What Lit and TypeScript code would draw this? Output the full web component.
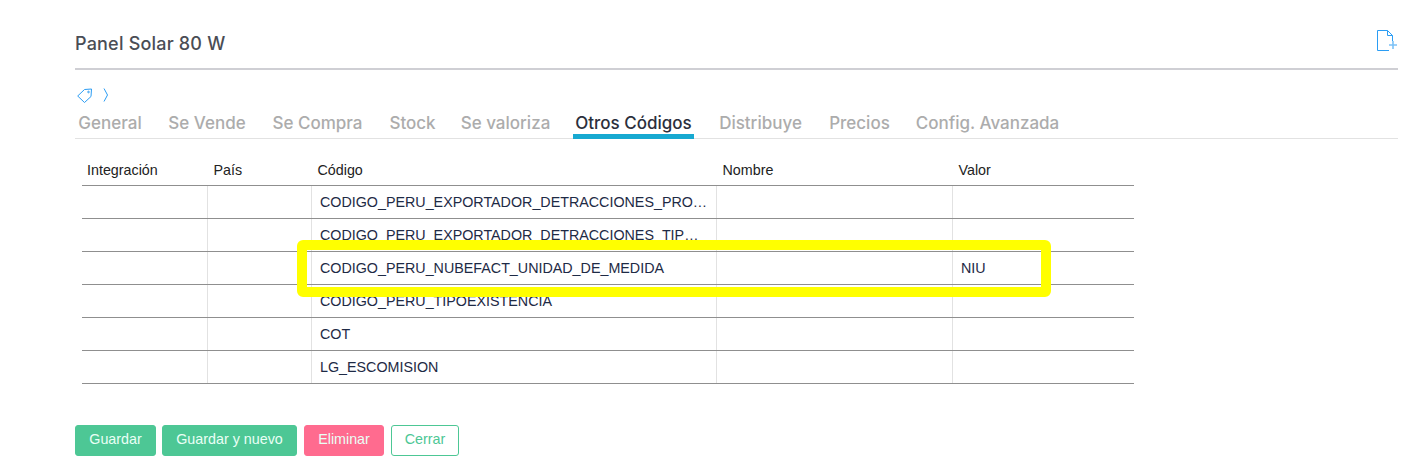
import { LitElement, html, css } from 'lit';
import { customElement } from 'lit/decorators.js';

const TABS = [
  { label: 'General', width: 68 },
  { label: 'Se Vende', width: 82 },
  { label: 'Se Compra', width: 95 },
  { label: 'Stock', width: 51 },
  { label: 'Se valoriza', width: 91 },
  { label: 'Otros Códigos', width: 121 },
  { label: 'Distribuye', width: 89 },
  { label: 'Precios', width: 65 },
  { label: 'Config. Avanzada', width: 147 },
];

const ROWS = [
  { code: 'CODIGO_PERU_EXPORTADOR_DETRACCIONES_PRODUCTO', value: '' },
  { code: 'CODIGO_PERU_EXPORTADOR_DETRACCIONES_TIPO_OPERACION', value: '' },
  { code: 'CODIGO_PERU_NUBEFACT_UNIDAD_DE_MEDIDA', value: 'NIU' },
  { code: 'CODIGO_PERU_TIPOEXISTENCIA', value: '' },
  { code: 'COT', value: '' },
  { code: 'LG_ESCOMISION', value: '' },
];

@customElement('app-root')
export class AppRoot extends LitElement {
  static styles = css`
    :host {
      display: block;
      position: relative;
      height: 474px;
      background: #fff;
      font-family: 'Liberation Sans', Arial, sans-serif;
      overflow: hidden;
    }
    .page {
      display: flex;
      flex-direction: column;
      padding: 0 7px 0 75px;
    }
    .head {
      display: flex;
      justify-content: space-between;
      align-items: flex-start;
      height: 68px;
      border-bottom: 2px solid #cfcfd4;
      box-sizing: content-box;
    }
    .title {
      margin-top: 33px;
      font-family: Inter, 'Open Sans', sans-serif;
      font-size: 18px;
      line-height: 21px;
      font-weight: 500;
      color: #4a4d55;
      letter-spacing: 0.2px;
    }
    .new {
      margin: 30px 0 0 0;
      width: 22px;
      height: 22px;
    }
    .crumb {
      display: flex;
      align-items: center;
      gap: 10px;
      height: 16px;
      margin-top: 17px;
      padding-left: 2px;
    }
    .tabs {
      display: flex;
      gap: 22px;
      height: 34px;
      margin-top: 2px;
      border-bottom: 1px solid #e2e2e2;
      box-sizing: border-box;
      padding-left: 1px;
    }
    .tab {
      padding: 5px 0 0;
      height: 34px;
      box-sizing: border-box;
      font-family: Inter, 'Open Sans', sans-serif;
      font-size: 17px;
      line-height: 26px;
      font-weight: 500;
      color: #acacac;
      text-align: center;
      white-space: nowrap;
    }
    .tab.on {
      color: #2b2f3c;
      border-bottom: 5px solid #17a9d1;
    }
    table {
      width: 1052px;
      margin: 16px 0 0 7px;
      border-collapse: collapse;
      table-layout: fixed;
      font-size: 14.3px;
      color: #1e2a45;
    }
    th {
      height: 30px;
      padding: 0 0 0 6.5px;
      text-align: left;
      font-weight: 400;
      color: #222;
      border-bottom: 1px solid #8f8f8f;
    }
    th:first-child {
      padding-left: 5px;
    }
    td {
      height: 32px;
      padding: 0 8px 0 8.5px;
      border-bottom: 1px solid #8f8f8f;
      border-left: 1px solid #e2e2e2;
      white-space: nowrap;
      overflow: hidden;
      text-overflow: ellipsis;
    }
    td:first-child {
      border-left: 0;
    }
    .actions {
      display: flex;
      gap: 6px;
      margin-top: 41px;
    }
    button {
      height: 31px;
      padding: 0 0 3px;
      border: 1px solid #4dc795;
      border-radius: 3px;
      background: #4dc795;
      color: #eafff5;
      font-family: inherit;
      font-size: 14.3px;
    }
    button.del {
      background: #ff6b8f;
      border-color: #ff6b8f;
      margin-left: 1px;
    }
    button.close {
      background: #fff;
      color: #4dc795;
      margin-left: 1px;
    }
    .mark {
      position: absolute;
      left: 297px;
      top: 240px;
      width: 754px;
      height: 57px;
      box-sizing: border-box;
      border: 10px solid #ffff00;
      border-radius: 6px;
      pointer-events: none;
    }
  `;

  render() {
    return html`
      <div class="page">
        <div class="head">
          <div class="title">Panel Solar 80 W</div>
          <svg class="new" viewBox="0 0 22 22" fill="none" stroke="#2b9df4" stroke-width="1">
            <path d="M13 20.5H1.5V0.5H11.5L16.5 5.5V11"/>
            <path d="M11.5 0.5V5.5H16.5"/>
            <path d="M17 11V19M13 15H21" stroke="#7cc2f7" stroke-width="1.6"/>
          </svg>
        </div>
        <div class="crumb">
          <svg width="16" height="16" viewBox="0 0 16 16" fill="none" stroke="#2b9df4" stroke-width="1">
            <path d="M0.7 9L7.5 2.5L14.5 2L14 9.5L7.5 15.5Z"/>
            <circle cx="11.5" cy="5" r="0.8"/>
          </svg>
          <svg width="6" height="16" viewBox="0 0 6 16" fill="none" stroke="#2b9df4" stroke-width="1">
            <path d="M1 1.5L4.5 8L1 14.5"/>
          </svg>
        </div>
        <div class="tabs">
          ${TABS.map(t => html`<div class="tab ${t.label === 'Otros Códigos' ? 'on' : ''}" style="width:${t.width}px">${t.label}</div>`)}
        </div>
        <table>
          <colgroup>
            <col style="width:125px" /><col style="width:104px" /><col style="width:405px" /><col style="width:236px" /><col style="width:182px" />
          </colgroup>
          <thead>
            <tr><th>Integración</th><th>País</th><th>Código</th><th>Nombre</th><th>Valor</th></tr>
          </thead>
          <tbody>
            ${ROWS.map(r => html`<tr><td></td><td></td><td>${r.code}</td><td></td><td>${r.value}</td></tr>`)}
          </tbody>
        </table>
        <div class="actions">
          <button style="width:81px">Guardar</button>
          <button style="width:135px">Guardar y nuevo</button>
          <button class="del" style="width:80px">Eliminar</button>
          <button class="close" style="width:68px">Cerrar</button>
        </div>
      </div>
      <div class="mark"></div>
    `;
  }
}
